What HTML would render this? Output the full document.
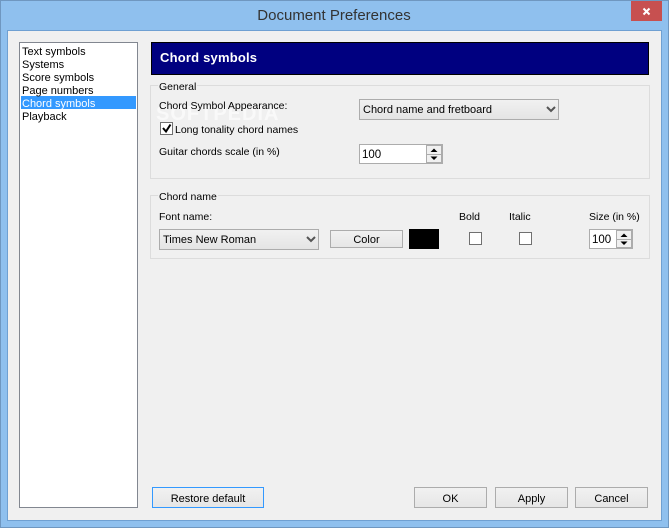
<!DOCTYPE html>
<html><head><meta charset="utf-8">
<style>
html,body{margin:0;padding:0;width:669px;height:528px;overflow:hidden;background:#8fc0ee}
#w{position:relative;width:669px;height:528px;overflow:hidden;font-family:"Liberation Sans",sans-serif;font-size:10.5px;color:#000;background:#8fc0ee}
#w div{position:absolute;box-sizing:border-box;white-space:nowrap}
.t{line-height:13px;height:13px}
.l{font-size:11px}
.btn{background:linear-gradient(#f1f1f1,#e6e6e6);border:1px solid #acacac;text-align:center;font-size:11px}
.sel{background:linear-gradient(#f1f1f1,#e4e4e4);border:1px solid #acacac;line-height:21px;padding-left:3px;font-size:11px}
.grp{border:1px solid #dcdcdc}
.cap{background:#f0f0f0;padding:0 1px;line-height:13px;height:13px}
.cb{background:#fff;border:1px solid #707070;width:13px;height:13px}
.spin{background:#fff;border:1px solid #acacac}
svg{position:absolute;display:block}
</style></head><body>
<div id="w">
<div style="left:0;top:0;width:669px;height:528px;border:1px solid #6f97c0"></div>
<div style="left:0;top:0;width:669px;height:31px;text-align:center;font-size:15px;line-height:31px;color:#333;padding-right:1px">Document Preferences</div>
<div style="left:631px;top:1px;width:31px;height:20px;background:#c75050"></div>
<svg style="left:631px;top:1px" width="31" height="20"><path d="M12.500 7.500l6 6M18.500 7.500l-6 6" stroke="#fff" stroke-width="2"/></svg>
<div style="left:7px;top:30px;width:655px;height:491px;background:#f0f0f0;border:1px solid #6fa0d2"></div>

<div style="left:19px;top:42px;width:119px;height:466px;background:#fff;border:1px solid #828790"></div>
<div style="left:21px;top:96px;width:115px;height:13px;background:#3399ff"></div>
<div class="t l" style="left:22px;top:46px">Text symbols</div>
<div class="t l" style="left:22px;top:59px">Systems</div>
<div class="t l" style="left:22px;top:72px">Score symbols</div>
<div class="t l" style="left:22px;top:85px">Page numbers</div>
<div class="t l" style="left:22px;top:98px;color:#fff">Chord symbols</div>
<div class="t l" style="left:22px;top:111px">Playback</div>

<div style="left:151px;top:42px;width:498px;height:33px;background:#000080;border:1px solid #000"></div>
<div style="left:160px;top:50px;color:#fff;font-weight:bold;font-size:13px;line-height:16px;letter-spacing:.2px">Chord symbols</div>

<div class="grp" style="left:150px;top:85px;width:500px;height:94px"></div>
<div class="cap" style="left:158px;top:81px">General</div>
<div class="t" style="left:156px;top:104px;font-size:20px;line-height:20px;height:20px;font-weight:bold;letter-spacing:1px;color:#f9f9f9">SOFTPEDIA</div>
<div class="t" style="left:159px;top:100px">Chord Symbol Appearance:</div>
<div class="sel" style="left:359px;top:99px;width:200px;height:21px">Chord name and fretboard</div>
<svg style="left:546px;top:106px" width="10" height="8"><path d="M1 1l4 4 4-4" fill="none" stroke="#555" stroke-width="2"/></svg>
<div class="cb" style="left:160px;top:122px"></div>
<svg style="left:160px;top:122px" width="13" height="13"><path d="M3 6l3 3.500 4.500-7" fill="none" stroke="#000" stroke-width="2"/></svg>
<div class="t" style="left:175px;top:124px">Long tonality chord names</div>
<div class="t" style="left:159px;top:146px">Guitar chords scale (in %)</div>
<div class="spin" style="left:359px;top:144px;width:84px;height:20px;line-height:20px;padding-left:2px;font-size:11.5px">100</div>
<div style="left:426px;top:145px;width:16px;height:18px;background:#f0f0f0;border:1px solid #acacac"></div>
<div style="left:427px;top:154px;width:14px;height:1px;background:#acacac"></div>
<svg style="left:427px;top:146px" width="14" height="16"><path d="M7 2.500l3.500 3.500h-7zM7 14l-3.500-3.500h7z" fill="#000"/></svg>

<div class="grp" style="left:150px;top:195px;width:500px;height:64px"></div>
<div class="cap" style="left:158px;top:191px">Chord name</div>
<div class="t" style="left:159px;top:211px">Font name:</div>
<div class="sel" style="left:159px;top:229px;width:160px;height:21px">Times New Roman</div>
<svg style="left:306px;top:236px" width="10" height="8"><path d="M1 1l4 4 4-4" fill="none" stroke="#555" stroke-width="2"/></svg>
<div class="btn" style="left:330px;top:230px;width:73px;height:18px;line-height:18px">Color</div>
<div style="left:409px;top:229px;width:30px;height:20px;background:#000"></div>
<div class="t" style="left:459px;top:211px">Bold</div>
<div class="t" style="left:509px;top:211px">Italic</div>
<div class="t" style="left:589px;top:211px">Size (in %)</div>
<div class="cb" style="left:469px;top:232px"></div>
<div class="cb" style="left:519px;top:232px"></div>
<div class="spin" style="left:589px;top:229px;width:44px;height:20px;line-height:20px;padding-left:2px;font-size:11.5px">100</div>
<div style="left:616px;top:230px;width:16px;height:18px;background:#f0f0f0;border:1px solid #acacac"></div>
<div style="left:617px;top:239px;width:14px;height:1px;background:#acacac"></div>
<svg style="left:617px;top:231px" width="14" height="16"><path d="M7 2.500l3.500 3.500h-7zM7 14l-3.500-3.500h7z" fill="#000"/></svg>

<div class="btn" style="left:152px;top:487px;width:112px;height:21px;line-height:22px;border-color:#3399ff">Restore default</div>
<div class="btn" style="left:414px;top:487px;width:73px;height:21px;line-height:22px">OK</div>
<div class="btn" style="left:495px;top:487px;width:73px;height:21px;line-height:22px">Apply</div>
<div class="btn" style="left:575px;top:487px;width:73px;height:21px;line-height:22px">Cancel</div>
</div>
</body></html>
